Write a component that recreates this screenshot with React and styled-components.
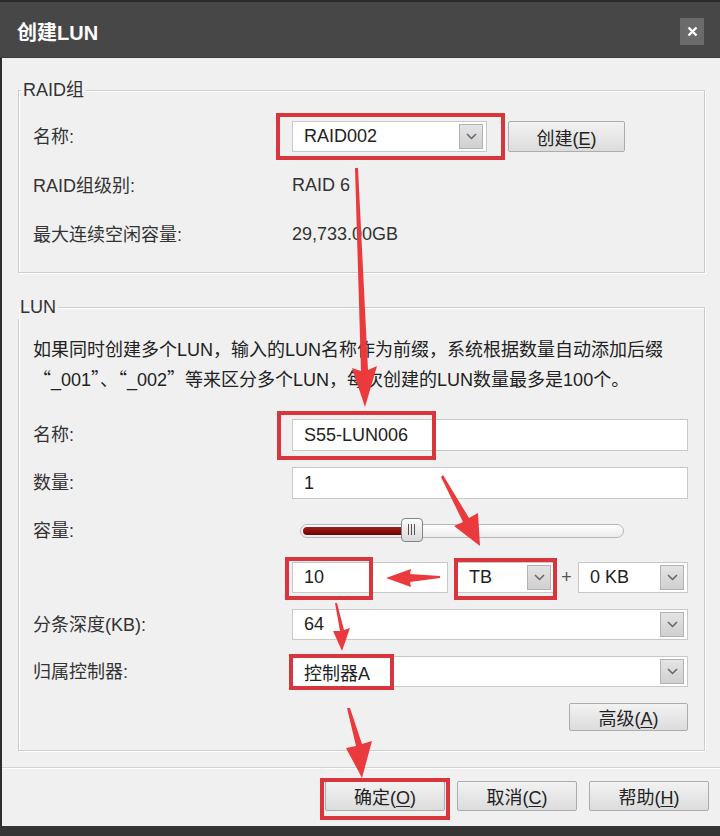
import React from 'react'
import styled, { createGlobalStyle } from 'styled-components'

const GlobalStyle = createGlobalStyle`
  html, body {
    margin: 0;
    padding: 0;
    background: #f0f0f0;
  }
  body {
    font-family: "Liberation Sans", "Noto Sans CJK SC", sans-serif;
  }
`

const Dialog = styled.div`
  position: relative;
  width: 720px;
  height: 836px;
  display: flex;
  flex-direction: column;
  background: #f0f0f0;
  box-shadow: inset 2px 0 0 #2c2c2c;
  overflow: hidden;
  color: #333;
  font-size: 18px;
`

const TitleBar = styled.div`
  flex: none;
  height: 58px;
  box-sizing: border-box;
  display: flex;
  align-items: center;
  justify-content: space-between;
  padding: 4px 16px 0 17px;
  background: #474747;
  border-top: 2px solid #2a2a2a;
  border-bottom: 1px solid #3a3a3a;
`

const Title = styled.h1`
  margin: 0;
  font-size: 20px;
  font-weight: 700;
  color: #fff;
`

const CloseButton = styled.button`
  width: 24px;
  height: 27px;
  padding: 0;
  border: none;
  background: #6b6b6b;
  display: flex;
  align-items: center;
  justify-content: center;
`

const Body = styled.div`
  padding: 20px 15px 0 18px;
`

const GroupBox = styled.fieldset`
  margin: ${p => p.$top}px 0 0;
  padding: 0 16px ${p => p.$bottom}px 14px;
  border: 1px solid #cdcdcd;
  box-shadow: inset 1px 1px 0 #fff, 1px 1px 0 #fff;
  min-width: 0;
`

const Legend = styled.legend`
  margin-left: ${p => p.$shift}px;
  padding: 0 2px;
  line-height: 24px;
  color: #333;
`

const FormGrid = styled.div`
  display: grid;
  grid-template-columns: 259px 1fr;
  align-items: center;
  row-gap: ${p => p.$gap}px;
  margin-top: ${p => p.$top || 0}px;
`

const Label = styled.span`
  line-height: 24px;
  color: #333;
`

const Value = styled.span`
  line-height: 31px;
  color: #333;
`

const Inline = styled.div`
  display: flex;
  align-items: center;
  height: ${p => (p.$height ? `${p.$height}px` : 'auto')};
  margin-left: ${p => p.$indent || 0}px;
  gap: ${p => p.$gap || 0}px;
`

const Note = styled.p`
  margin: 16px 0 24px;
  height: 60px;
  line-height: 30px;
  color: #222;
`

const Quote = styled.span`
  font-family: "Noto Sans CJK SC", sans-serif;
  line-height: 1;
`

const Field = styled.div`
  width: ${p => (p.$width ? `${p.$width}px` : 'auto')};
  height: ${p => p.$height || 31}px;
  box-sizing: border-box;
  display: flex;
  align-items: center;
  justify-content: space-between;
  padding: 0 3px 0 11px;
  background: #fff;
  border: 1px solid #c8c8c8;
  color: #222;
`

const DropButton = styled.span`
  flex: none;
  width: 24px;
  height: 25px;
  box-sizing: border-box;
  display: flex;
  align-items: center;
  justify-content: center;
  background: linear-gradient(#e4e4e4, #d0d0d0);
  border: 1px solid #b2b2b2;
`

const PushButton = styled.button`
  width: ${p => p.$width}px;
  height: ${p => p.$height}px;
  padding: 0;
  border: 1px solid #acacac;
  border-radius: 2px;
  background: linear-gradient(#f2f2f2, #dcdcdc);
  font: inherit;
  font-size: 18px;
  color: #222;
  justify-self: ${p => p.$align || 'auto'};

  u {
    text-decoration-thickness: 1px;
    text-underline-offset: 2px;
  }
`

const Plus = styled.span`
  width: 23px;
  text-align: center;
  color: #555;
`

const SliderTrack = styled.div`
  position: relative;
  margin-left: 8px;
  width: 324px;
  height: 14px;
  box-sizing: border-box;
  border: 1px solid #b8b8b8;
  border-radius: 7px;
  background: linear-gradient(#fefefe, #ececec);
`

const SliderFill = styled.div`
  position: absolute;
  left: 2px;
  top: 2px;
  bottom: 2px;
  width: ${p => p.$percent}%;
  border-radius: 5px 0 0 5px;
  background: linear-gradient(#a22020, #6a0202);
`

const SliderThumb = styled.div`
  position: absolute;
  left: ${p => p.$percent}%;
  top: -7px;
  width: 22px;
  height: 24px;
  box-sizing: border-box;
  display: flex;
  align-items: center;
  justify-content: center;
  gap: 2px;
  border: 1px solid #7c8787;
  border-radius: 4px;
  background: linear-gradient(#fbfbfb, #dadada);
`

const Grip = styled.span`
  width: 1px;
  height: 11px;
  background: #555;
`

const Footer = styled.div`
  margin: 16px 0 0 2px;
  display: flex;
  justify-content: flex-end;
  gap: 12px;
  padding: 13px 11px 0 0;
  border-top: 1px solid #d2d2d2;
  box-shadow: inset 0 1px 0 #fff;
`

const BottomEdge = styled.div`
  margin-top: auto;
  height: 10px;
  background: #353535;
`

const Markup = styled.svg`
  position: absolute;
  left: 0;
  top: 0;
  pointer-events: none;
`

const Chevron = () => (
  <svg width="11" height="7" viewBox="0 0 11 7">
    <path d="M1 1 L5.5 5.5 L10 1" fill="none" stroke="#666" strokeWidth="1.5" />
  </svg>
)

const Combo = ({ value, width }) => (
  <Field $width={width}>
    <span>{value}</span>
    <DropButton>
      <Chevron />
    </DropButton>
  </Field>
)

const Slider = ({ percent }) => (
  <SliderTrack>
    <SliderFill $percent={percent} />
    <SliderThumb $percent={percent}>
      <Grip />
      <Grip />
      <Grip />
    </SliderThumb>
  </SliderTrack>
)

const RED = '#d8363c'

// highlight frames: x, y, width, height
const boxes = [
  [278, 115, 225, 43],
  [279, 413, 155, 45],
  [287, 559, 84, 39],
  [456, 560, 99, 38],
  [291, 656, 101, 32],
  [322, 780, 126, 38],
]

const arrows = [
  '355,168 358,168 368,370 377,366 365,407 352,368 361,371',
  '441,477 443,475 469,518 478,513 480,546 454,526 463,522',
  '440,576 440,578 410,582 411,587 386,578 411,569 410,574',
  '335,603 337,603 344,630 350,628 342,651 333,631 340,631',
  '347,708 350,708 362,744 372,741 362,778 346,748 356,746',
]

export default function App() {
  return (
    <>
      <GlobalStyle />
      <Dialog>
        <TitleBar>
          <Title>创建LUN</Title>
          <CloseButton>
            <svg width="11" height="11" viewBox="0 0 11 11">
              <path d="M1.5 1.5 L9.5 9.5 M9.5 1.5 L1.5 9.5" stroke="#fff" strokeWidth="2.4" />
            </svg>
          </CloseButton>
        </TitleBar>

        <Body>
          <GroupBox $top={0} $bottom={22}>
            <Legend $shift={-12}>RAID组</Legend>
            <FormGrid $gap={18} $top={19}>
              <Label>名称:</Label>
              <Inline $gap={21}>
                <Combo value="RAID002" width={195} />
                <PushButton $width={117} $height={31}>
                  创建(<u>E</u>)
                </PushButton>
              </Inline>
              <Label>RAID组级别:</Label>
              <Value>RAID 6</Value>
              <Label>最大连续空闲容量:</Label>
              <Value>29,733.00GB</Value>
            </FormGrid>
          </GroupBox>

          <GroupBox $top={22} $bottom={19}>
            <Legend $shift={-15}>LUN</Legend>
            <Note>
              如果同时创建多个LUN，输入的LUN名称作为前缀，系统根据数量自动添加后缀
              <br />
              <Quote>“</Quote>_001<Quote>”</Quote>、<Quote>“</Quote>_002<Quote>”</Quote>等来区分多个LUN，每次创建的LUN数量最多是100个。
            </Note>
            <FormGrid $gap={16}>
              <Label>名称:</Label>
              <Field $height={32}>S55-LUN006</Field>
              <Label>数量:</Label>
              <Field $height={32}>1</Field>
              <Label>容量:</Label>
              <Inline $height={31}>
                <Slider percent={31} />
              </Inline>
              <span />
              <Inline>
                <Field $width={156}>10</Field>
                <Inline $indent={9}>
                  <Combo value="TB" width={98} />
                  <Plus>+</Plus>
                  <Combo value="0 KB" width={110} />
                </Inline>
              </Inline>
              <Label>分条深度(KB):</Label>
              <Combo value="64" />
              <Label>归属控制器:</Label>
              <Combo value="控制器A" />
              <span />
              <PushButton $width={119} $height={28} $align="end">
                高级(<u>A</u>)
              </PushButton>
            </FormGrid>
          </GroupBox>
        </Body>

        <Footer>
          <PushButton $width={120} $height={30}>
            确定(<u>O</u>)
          </PushButton>
          <PushButton $width={120} $height={30}>
            取消(<u>C</u>)
          </PushButton>
          <PushButton $width={120} $height={30}>
            帮助(<u>H</u>)
          </PushButton>
        </Footer>

        <BottomEdge />

        <Markup width="720" height="836" viewBox="0 0 720 836">
          {boxes.map(([x, y, w, h]) => (
            <rect key={`${x}-${y}`} x={x} y={y} width={w} height={h} fill="none" stroke={RED} strokeWidth="4" />
          ))}
          {arrows.map(points => (
            <polygon key={points} points={points} fill="#ea3a3e" />
          ))}
        </Markup>
      </Dialog>
    </>
  )
}
